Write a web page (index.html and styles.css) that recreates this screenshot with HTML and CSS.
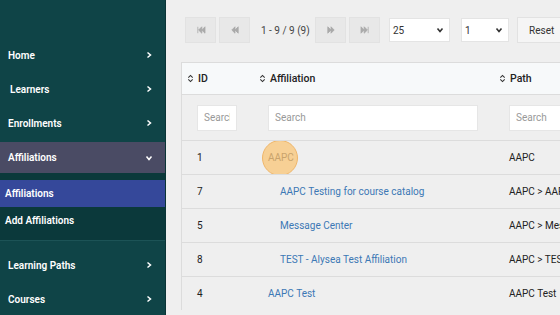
FILE: index.html
```html
<!DOCTYPE html>
<html lang="en">
<head>
  <meta charset="UTF-8" />
  <title>Affiliations</title>
  <link rel="stylesheet" href="styles.css">
</head>
<body>
  <div class="layout">
    <nav class="sidebar">
      <a class="nav-item" href="#"><span>Home</span><svg class="chev" viewBox="0 0 8 8"><path d="M2.5 1.5 5.5 4 2.5 6.5"/></svg></a>
      <a class="nav-item learners" href="#"><span>Learners</span><svg class="chev" viewBox="0 0 8 8"><path d="M2.5 1.5 5.5 4 2.5 6.5"/></svg></a>
      <a class="nav-item" href="#"><span>Enrollments</span><svg class="chev" viewBox="0 0 8 8"><path d="M2.5 1.5 5.5 4 2.5 6.5"/></svg></a>
      <a class="nav-item open" href="#"><span>Affiliations</span><svg class="chev" viewBox="0 0 8 8"><path d="M1.5 2.5 4 5.5 6.5 2.5"/></svg></a>
      <div class="submenu">
        <a class="sub-item current" href="#">Affiliations</a>
        <a class="sub-item" href="#">Add Affiliations</a>
      </div>
      <a class="nav-item" href="#"><span>Learning Paths</span><svg class="chev" viewBox="0 0 8 8"><path d="M2.5 1.5 5.5 4 2.5 6.5"/></svg></a>
      <a class="nav-item" href="#"><span>Courses</span><svg class="chev" viewBox="0 0 8 8"><path d="M2.5 1.5 5.5 4 2.5 6.5"/></svg></a>
    </nav>

    <main class="content">
      <div class="toolbar">
        <button class="pg"><svg viewBox="0 0 12 10"><path d="M2 1v8M7 1 3 5l4 4zM11 1 7 5l4 4z"/></svg></button>
        <button class="pg"><svg viewBox="0 0 12 10"><path d="M6 1 2 5l4 4zM10 1 6 5l4 4z"/></svg></button>
        <span class="range">1 - 9 / 9 (9)</span>
        <button class="pg"><svg viewBox="0 0 12 10"><path d="M2 1l4 4-4 4zM6 1l4 4-4 4z"/></svg></button>
        <button class="pg"><svg viewBox="0 0 12 10"><path d="M1 1l4 4-4 4zM5 1l4 4-4 4zM10 1v8"/></svg></button>
        <div class="select wide">25<svg viewBox="0 0 8 8"><path d="M1.5 2.5 4 5.5 6.5 2.5"/></svg></div>
        <div class="select narrow">1<svg viewBox="0 0 8 8"><path d="M1.5 2.5 4 5.5 6.5 2.5"/></svg></div>
        <button class="reset">Reset</button>
      </div>

      <div class="panel">
        <table class="grid">
          <colgroup>
            <col class="c-id"><col class="c-aff"><col class="c-path">
          </colgroup>
          <thead>
            <tr class="head">
              <th><svg class="sort" viewBox="0 0 8 10"><path d="M1.5 4 4 1.5 6.5 4M1.5 6 4 8.5 6.5 6"/></svg>ID</th>
              <th><svg class="sort" viewBox="0 0 8 10"><path d="M1.5 4 4 1.5 6.5 4M1.5 6 4 8.5 6.5 6"/></svg>Affiliation</th>
              <th><svg class="sort" viewBox="0 0 8 10"><path d="M1.5 4 4 1.5 6.5 4M1.5 6 4 8.5 6.5 6"/></svg>Path</th>
            </tr>
            <tr class="filters">
              <td><input class="f-id" placeholder="Search"></td>
              <td><input class="f-aff" placeholder="Search"></td>
              <td><input class="f-path" placeholder="Search"></td>
            </tr>
          </thead>
          <tbody>
            <tr><td>1</td><td><span class="hit">AAPC</span></td><td>AAPC</td></tr>
            <tr><td>7</td><td><a class="lvl2" href="#">AAPC Testing for course catalog</a></td><td>AAPC &gt; AAPC Testing for course catalog</td></tr>
            <tr><td>5</td><td><a class="lvl2" href="#">Message Center</a></td><td>AAPC &gt; Message Center</td></tr>
            <tr><td>8</td><td><a class="lvl2" href="#">TEST - Alysea Test Affiliation</a></td><td>AAPC &gt; TEST - Alysea Test Affiliation</td></tr>
            <tr><td>4</td><td><a href="#">AAPC Test</a></td><td>AAPC Test</td></tr>
          </tbody>
        </table>
      </div>
    </main>
  </div>
</body>
</html>
```

FILE: styles.css
```css
body {
  margin: 0;
  font-family: Roboto, "Liberation Sans", sans-serif;
  background: #efefef;
  color: #333;
}
.layout {
  display: flex;
  width: 560px;
  height: 315px;
  overflow: hidden;
}
.sidebar {
  width: 166px;
  flex-shrink: 0;
  background: #0f4447;
  padding-top: 38px;
  border-right: 1px solid #0a3436;
  box-sizing: border-box;
}
.nav-item {
  display: flex;
  align-items: center;
  justify-content: space-between;
  height: 34px;
  padding: 0 12px 0 8px;
  color: #fff;
  font-size: 10px;
  font-weight: 600;
  text-decoration: none;
}
.nav-item.learners span {
  padding-left: 2px;
}
.nav-item.open {
  background: #4a4b64;
  margin-top: 2px;
  height: 31px;
}
.chev {
  width: 8px;
  height: 8px;
  fill: none;
  stroke: #fff;
  stroke-width: 1.5;
}
.submenu {
  background: #0b393b;
  padding: 7px 0 6px;
  border-bottom: 1px solid #1c5356;
  margin-bottom: 7px;
}
.sub-item {
  display: flex;
  align-items: center;
  height: 27px;
  padding-left: 5px;
  color: #fff;
  font-size: 10px;
  font-weight: 600;
  text-decoration: none;
}
.sub-item.current {
  background: #35489a;
}
.content {
  flex: 1;
  padding: 17px 0 0 15px;
  min-width: 0;
}
.toolbar {
  display: flex;
  align-items: center;
  height: 26px;
  padding-left: 4px;
  white-space: nowrap;
}
.toolbar > * {
  flex-shrink: 0;
}
.pg {
  width: 31px;
  height: 26px;
  margin-right: 3px;
  background: #e8e8e8;
  border: 1px solid #e2e2e2;
  padding: 0;
  display: flex;
  align-items: center;
  justify-content: center;
}
.pg svg {
  width: 10px;
  height: 8px;
  fill: #aaa;
  stroke: #aaa;
  stroke-width: 1;
}
.range {
  font-size: 10px;
  color: #444;
  width: 62px;
  box-sizing: border-box;
  padding-left: 8px;
}
.select {
  display: flex;
  align-items: center;
  justify-content: space-between;
  height: 24px;
  background: #fff;
  border: 1px solid #e4e4e4;
  font-size: 10px;
  padding: 0 5px 0 3px;
  box-sizing: border-box;
}
.select svg {
  width: 8px;
  height: 8px;
  fill: none;
  stroke: #333;
  stroke-width: 1.6;
}
.select.wide {
  width: 61px;
  margin-left: 6px;
}
.select.narrow {
  width: 48px;
  margin-left: 11px;
}
.reset {
  margin-left: 8px;
  height: 26px;
  width: 60px;
  background: #f5f5f5;
  border: 1px solid #e2e2e2;
  font-family: inherit;
  font-size: 10px;
  color: #333;
  text-align: left;
  padding-left: 11px;
}
.panel {
  margin-top: 19px;
  border-left: 1px solid #dcdcdc;
  border-top: 1px solid #dcdcdc;
  width: 400px;
}
.grid {
  border-collapse: collapse;
  table-layout: fixed;
  width: 400px;
  font-size: 10px;
}
.c-id { width: 74px; }
.c-aff { width: 240px; }
.c-path { width: 86px; }
.grid th {
  text-align: left;
  font-weight: 500;
  font-size: 10.5px;
  height: 31px;
  padding: 0 0 0 5px;
  background: #f7f9fa;
  color: #222;
  white-space: nowrap;
}
.grid th:nth-child(2) { padding-left: 3px; }
.grid th:nth-child(3) { padding-left: 3px; }
.sort {
  width: 7px;
  height: 9px;
  fill: none;
  stroke: #333;
  stroke-width: 1.2;
  vertical-align: -1px;
  margin-right: 4px;
}
.grid td {
  padding: 0;
}
.filters td {
  height: 45px;
  border-top: 1px solid #dcdcdc;
}
.grid input {
  height: 26px;
  box-sizing: border-box;
  border: 1px solid #e6e6e6;
  background: #fff;
  font-family: inherit;
  font-size: 10px;
  padding: 0 6px;
  display: block;
}
.grid input::placeholder { color: #999; }
.f-id { width: 40px; margin-left: 15px; }
.f-aff { width: 210px; margin-left: 12px; }
.f-path { width: 60px; margin-left: 13px; }
.grid tbody td {
  height: 33px;
  border-top: 1px solid #dcdcdc;
  white-space: nowrap;
  overflow: hidden;
  color: #222;
}
.grid tbody td:first-child { padding-left: 15px; }
.grid tbody td:nth-child(2) { padding-left: 12px; }
.grid tbody td:nth-child(3) { padding-left: 13px; }
.grid a {
  color: #3c78b5;
  text-decoration: none;
}
.grid a.lvl2 {
  padding-left: 12px;
}
.hit {
  position: relative;
  display: inline-block;
  color: #c9a36c;
}
.hit::before {
  content: "";
  position: absolute;
  left: -6px;
  top: -12px;
  width: 36px;
  height: 36px;
  border-radius: 50%;
  background: rgba(250, 190, 100, 0.65);
  border: 1px solid #efb66a;
  box-sizing: border-box;
  z-index: -1;
}
```
